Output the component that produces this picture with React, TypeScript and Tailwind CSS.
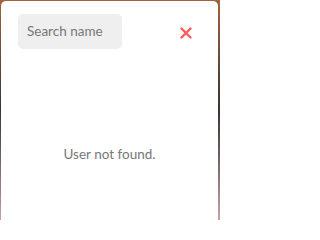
import React from 'react';

export default function App() {
  return (
    <div className="w-[220px] h-[220px] flex flex-col pt-[1px] pl-[1px] pr-[2px] bg-gradient-to-b from-[#a4623f] via-[#3a3434] to-[#c9a3a3]">
      <div
        className="flex-1 bg-white rounded-t-[5px] flex flex-col"
        style={{ fontFamily: 'Lato, "Noto Sans", sans-serif' }}
      >
        <div className="flex items-center pl-[17px] pr-[26px] pt-[13px]">
          <div className="w-[104px] h-[35px] bg-[#efefef] rounded-[5px] flex items-center pl-[9px] text-[13.5px] text-[#777777]">
            Search name
          </div>
          <div className="flex-1" />
          <svg width="12" height="12" viewBox="0 0 12 12" className="mt-[2px]">
            <path d="M1.5 1.5 L10.5 10.5 M10.5 1.5 L1.5 10.5" stroke="#ff5a5a" strokeWidth="2.4" strokeLinecap="round" />
          </svg>
        </div>
        <div className="flex justify-center pt-[95px]">
          <span className="text-[13.5px] text-[#777777]">User not found.</span>
        </div>
      </div>
    </div>
  );
}
